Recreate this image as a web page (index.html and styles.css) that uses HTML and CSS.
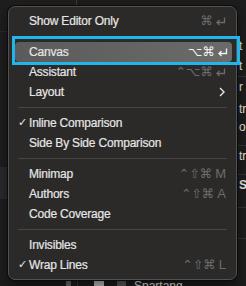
FILE: index.html
```html
<!DOCTYPE html>
<html lang="en">
  <head>
    <meta charset="utf-8">
    <link rel="stylesheet" href="styles.css">
  </head>
  <body>
    <div class="app">
      <div class="sidebar">
        <div class="side-top"></div>
        <div class="side-sel"></div>
      </div>
      <div class="editor">
        <div class="inspector">
          <div class="insp-row r1">t</div>
          <div class="insp-row r2">t</div>
          <div class="insp-row r3">r</div>
          <div class="insp-row r4">tr</div>
          <div class="insp-row r5">o</div>
          <div class="insp-row r6">tr</div>
          <div class="insp-row r7 bold">S</div>
          <div class="insp-row r8"></div>
          <div class="insp-row r9"></div>
        </div>
      </div>
      <div class="bottom-row">
        <span class="swatch"></span>
        <span class="vline"></span>
        <span class="checkbox"></span>
        <span class="file-icon"></span>
        <span class="file-name">Spartang</span>
      </div>

      <!-- editor options menu -->
      <div class="menu">
        <div class="item">Show Editor Only<span class="keys">⌘<svg class="ret" width="11" height="9" viewBox="0 0 11 9"><path d="M9.5 0.5v5H2 M4.5 3L2 5.5 4.5 8" fill="none" stroke="currentColor" stroke-width="1.3"/></svg></span></div>
        <div class="sep"></div>
        <div class="item active">Canvas<span class="keys">⌥⌘<svg class="ret" width="11" height="9" viewBox="0 0 11 9"><path d="M9.5 0.5v5H2 M4.5 3L2 5.5 4.5 8" fill="none" stroke="currentColor" stroke-width="1.3"/></svg></span></div>
        <div class="item">Assistant<span class="keys">⌃⌥⌘<svg class="ret" width="11" height="9" viewBox="0 0 11 9"><path d="M9.5 0.5v5H2 M4.5 3L2 5.5 4.5 8" fill="none" stroke="currentColor" stroke-width="1.3"/></svg></span></div>
        <div class="item">Layout
          <svg class="chev" width="6" height="10" viewBox="0 0 6 10"><path d="M1 1l4 4-4 4" fill="none" stroke="#e4e4e4" stroke-width="1.4"/></svg>
        </div>
        <div class="sep"></div>
        <div class="item"><span class="check">✓</span>Inline Comparison</div>
        <div class="item">Side By Side Comparison</div>
        <div class="sep"></div>
        <div class="item">Minimap<span class="keys">⌃⇧⌘<span class="letter">M</span></span></div>
        <div class="item">Authors<span class="keys">⌃⇧⌘<span class="letter">A</span></span></div>
        <div class="item">Code Coverage</div>
        <div class="sep"></div>
        <div class="item">Invisibles</div>
        <div class="item"><span class="check">✓</span>Wrap Lines<span class="keys">⌃⇧⌘<span class="letter">L</span></span></div>
      </div>

      <div class="callout"></div>
    </div>
  </body>
</html>
```

FILE: styles.css
```css
body {
  margin: 0;
  padding: 0;
  background: #1c1c1c;
  font-family: "Liberation Sans", Arial, sans-serif;
}

.app {
  position: relative;
  width: 246px;
  height: 286px;
  overflow: hidden;
  display: grid;
  grid-template-columns: 77px 1fr;
  grid-template-rows: 280px 6px;
}

.sidebar {
  background: #1e1e1e;
  border-right: 1px solid #3a3a3a;
  display: flex;
  flex-direction: column;
}

.side-top {
  height: 31px;
  border-bottom: 1px solid #2c2c2c;
}

.side-sel {
  margin-top: 135px;
  height: 32px;
  background: #2a2a2e;
}

.editor {
  background: #1d1d1d;
  display: flex;
  justify-content: flex-end;
}

.inspector {
  width: 8px;
  display: flex;
  flex-direction: column;
  padding-top: 36px;
  color: #e8e8e8;
  font-size: 12px;
}

.insp-row {
  height: 20px;
  line-height: 20px;
  white-space: nowrap;
  padding-left: 1px;
}

.r3 { height: 22px; border-top: 1px solid #333; }
.r4 { height: 18px; }
.r5 { height: 28px; border-bottom: 1px solid #333; }
.r6 { height: 28px; border-bottom: 1px solid #333; }
.r7 { height: 32px; border-bottom: 1px solid #333; }
.r8 { height: 30px; border-bottom: 1px solid #333; }
.bold { font-weight: bold; }

.bottom-row {
  grid-column: 1 / 3;
  display: flex;
  align-items: flex-start;
  background: #1c1c1c;
  font-size: 12px;
  color: #e0e0e0;
}

.swatch {
  width: 5px;
  height: 6px;
  margin-left: 66px;
  background: #6a6a6a;
}

.vline {
  width: 1px;
  height: 6px;
  margin-left: 6px;
  background: #3a3a3a;
}

.checkbox {
  width: 10px;
  height: 6px;
  margin-left: 16px;
  background: #bdbdbd;
}

.file-icon {
  width: 9px;
  height: 6px;
  margin-left: 13px;
  background: #5a5a5a;
}

.file-name {
  margin-left: 8px;
  line-height: 12px;
}

.menu {
  position: absolute;
  left: 8px;
  top: 6px;
  width: 227px;
  padding: 4px 0;
  background: #2b2a29;
  border: 1px solid #525150;
  border-radius: 7px;
  box-shadow: 0 0 0 1px #0b0b0b, 0 6px 14px rgba(0, 0, 0, 0.5);
  color: #e6e6e6;
  font-size: 12px;
  letter-spacing: -0.2px;
  -webkit-text-stroke: 0.2px #e6e6e6;
}

.item {
  position: relative;
  height: 20px;
  line-height: 20px;
  padding: 0 10px 0 20px;
  display: flex;
  align-items: center;
  white-space: nowrap;
}

.item.active {
  margin: 0 4px 0 6px;
  padding: 0 4px 0 14px;
  border-radius: 4px;
  background: linear-gradient(90deg, #5b5b5b, #6b6b6a);
}

.item.active .keys {
  color: #f2f2f2;
}

.keys {
  margin-left: auto;
  display: flex;
  align-items: center;
  gap: 1px;
  color: #6c6c6c;
  font-family: "DejaVu Sans", sans-serif;
  font-size: 12.5px;
  letter-spacing: 0;
  -webkit-text-stroke: 0;
}

.letter {
  font-family: "Liberation Sans", Arial, sans-serif;
  font-size: 13px;
  margin-left: 2px;
}

.ret {
  margin-left: 1px;
}

.chev {
  margin-left: auto;
  margin-right: 1px;
}

.check {
  position: absolute;
  left: 9px;
  font-family: "DejaVu Sans", sans-serif;
  font-size: 11px;
  -webkit-text-stroke: 0;
}

.sep {
  height: 1px;
  margin: 5px 9px;
  background: #474644;
}

.callout {
  position: absolute;
  left: 12px;
  top: 36px;
  width: 222px;
  height: 23px;
  border: 3px solid #22b5ea;
}
```
